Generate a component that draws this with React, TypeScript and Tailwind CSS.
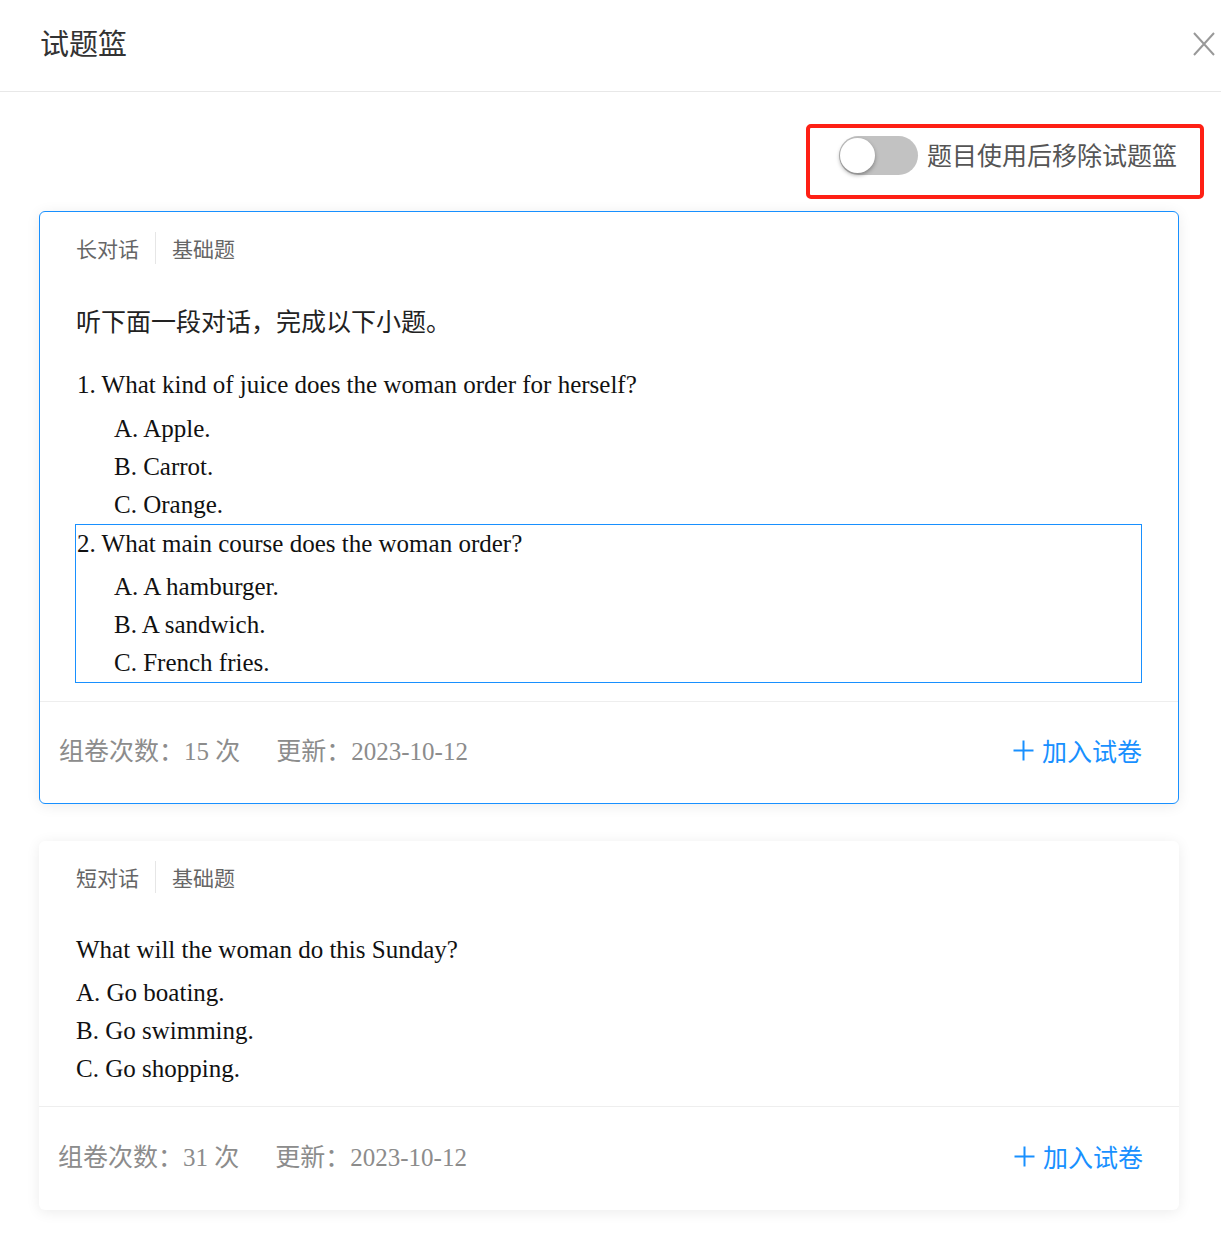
import React from "react";

const CJK = '"Noto Sans CJK SC", "Noto Sans", sans-serif';
const SERIF = '"Liberation Serif", "Noto Sans CJK SC", serif';

function Tags({ a, b }: { a: string; b: string }) {
  return (
    <div className="flex items-center h-[32px] text-[21px] text-[#666]" style={{ fontFamily: CJK }}>
      <span className="leading-[32px]">{a}</span>
      <span className="mx-[16px] w-px h-[32px] bg-[#e6e6e6]" />
      <span className="leading-[32px]">{b}</span>
    </div>
  );
}

function Footer({ count }: { count: string }) {
  return (
    <div className="flex items-center justify-between h-full pl-[19px] pr-[36px]">
      <div className="flex items-center text-[25px] text-[#8c8c8c] -mt-[2px]" style={{ fontFamily: SERIF }}>
        <span>组卷次数：{count} 次</span>
        <span className="ml-[36px]">更新：2023-10-12</span>
      </div>
      <div className="flex items-center text-[#1890ff] text-[25px] -mt-[4px]" style={{ fontFamily: CJK }}>
        <svg width="21" height="21" viewBox="0 0 21 21" className="mr-[8px]">
          <path d="M10.5 0.5 V20.5 M0.5 10.5 H20.5" stroke="#1890ff" strokeWidth="2" />
        </svg>
        <span>加入试卷</span>
      </div>
    </div>
  );
}

function Opt({ children, indent }: { children: React.ReactNode; indent?: boolean }) {
  return <div className={`h-[38px] leading-[38px] ${indent ? "pl-[37px]" : ""}`}>{children}</div>;
}

export default function App() {
  return (
    <div className="w-[1221px] min-h-[1235px] bg-white text-[#222]">
      {/* Header */}
      <div className="h-[92px] border-b border-[#e8e8e8] flex items-center justify-between pl-[40px] pr-[6px]">
        <div className="text-[29px] text-[#333] -mt-[6px]" style={{ fontFamily: CJK }}>试题篮</div>
        <svg width="22" height="24" viewBox="0 0 22 24" className="-mt-[3px]">
          <path d="M1 1 L21 23 M21 1 L1 23" stroke="#999" strokeWidth="2" />
        </svg>
      </div>

      {/* Toggle */}
      <div className="flex justify-end pr-[17px] mt-[32px]">
        <div className="w-[398px] h-[75px] border-[4px] border-[#fe2015] rounded-[5px] flex items-center pl-[29px] pb-[13px]">
          <div className="relative w-[79px] h-[39px] rounded-full bg-[#c2c2c2]">
            <div className="absolute left-[1px] top-[2px] w-[35px] h-[35px] rounded-full bg-white shadow-[0_2px_4px_rgba(0,0,0,0.35)]" />
          </div>
          <div className="ml-[9px] text-[25px] text-[#555]" style={{ fontFamily: CJK }}>题目使用后移除试题篮</div>
        </div>
      </div>

      {/* Card 1 */}
      <div className="ml-[39px] mt-[12px] w-[1140px] border border-[#1890ff] rounded-[6px] bg-white shadow-[0_2px_14px_rgba(0,0,0,0.08)]">
        <div className="pl-[36px] pr-[36px] pt-[20px]">
          <Tags a="长对话" b="基础题" />
          <div className="mt-[37px] h-[38px] leading-[38px] text-[25px] text-[#222]" style={{ fontFamily: CJK }}>
            听下面一段对话，完成以下小题。
          </div>
          <div className="text-[25px] text-[#111]" style={{ fontFamily: SERIF }}>
            <div className="mt-[27px] pl-[1px]">
              <div className="h-[38px] leading-[38px]">1. What kind of juice does the woman order for herself?</div>
              <div className="mt-[6px]">
                <Opt indent>A. Apple.</Opt>
                <Opt indent>B. Carrot.</Opt>
                <Opt indent>C. Orange.</Opt>
              </div>
            </div>
            <div className="border border-[#1890ff] -ml-[1px]">
              <div className="pl-[1px]">
                <div className="h-[38px] leading-[38px]">2. What main course does the woman order?</div>
                <div className="mt-[5px]">
                  <Opt indent>A. A hamburger.</Opt>
                  <Opt indent>B. A sandwich.</Opt>
                  <Opt indent>C. French fries.</Opt>
                </div>
              </div>
            </div>
          </div>
        </div>
        <div className="mt-[18px] border-t border-[#eeeeee] h-[102px]">
          <Footer count="15" />
        </div>
      </div>

      {/* Card 2 */}
      <div className="ml-[39px] mt-[37px] w-[1140px] rounded-[6px] bg-white shadow-[0_2px_14px_rgba(0,0,0,0.08)]">
        <div className="pl-[37px] pr-[36px] pt-[20px]">
          <Tags a="短对话" b="基础题" />
          <div className="text-[25px] text-[#111] mt-[38px]" style={{ fontFamily: SERIF }}>
            <div className="h-[38px] leading-[38px]">What will the woman do this Sunday?</div>
            <div className="mt-[5px]">
              <Opt>A. Go boating.</Opt>
              <Opt>B. Go swimming.</Opt>
              <Opt>C. Go shopping.</Opt>
            </div>
          </div>
        </div>
        <div className="mt-[18px] border-t border-[#eeeeee] h-[104px]">
          <Footer count="31" />
        </div>
      </div>
    </div>
  );
}
